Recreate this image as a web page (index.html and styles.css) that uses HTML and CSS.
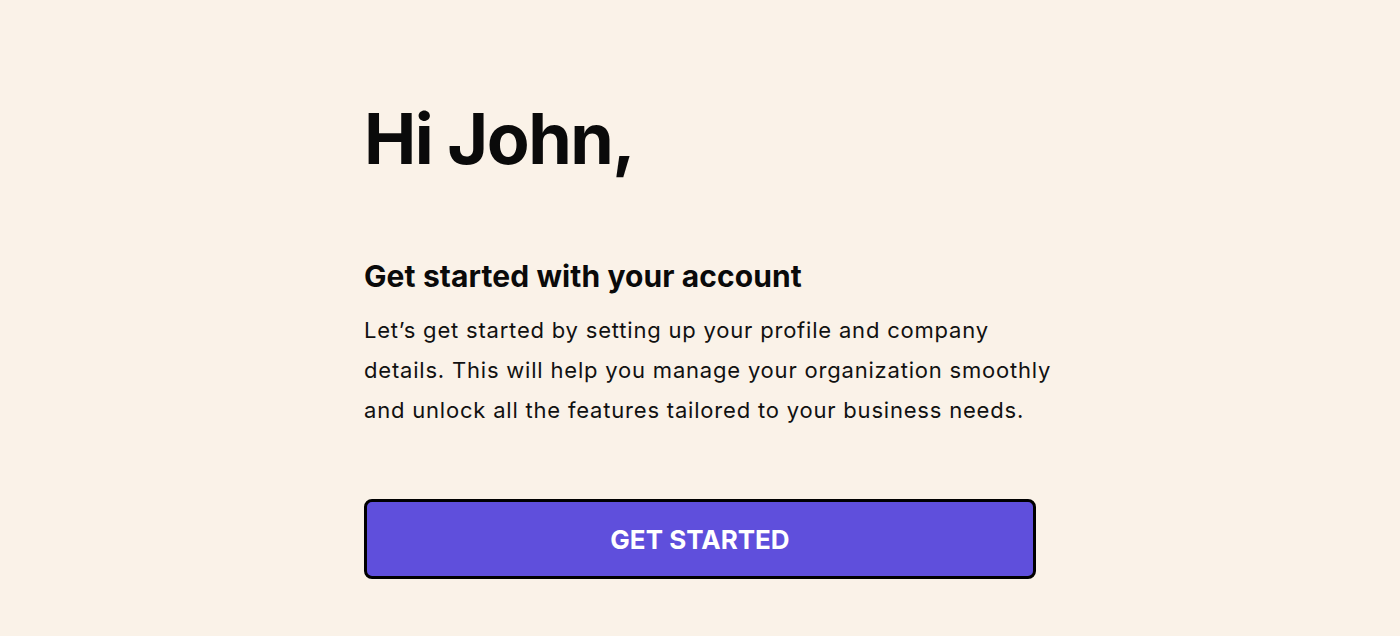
FILE: index.html
```html
<!DOCTYPE html>
<html lang="en">
<head>
<meta charset="utf-8">
<title>Welcome</title>
<link rel="stylesheet" href="styles.css">
</head>
<body>
<main class="page">
  <section class="welcome">
    <h1 class="greeting">Hi John,</h1>
    <h2 class="subtitle">Get started with your account</h2>
    <p class="intro">Let’s get started by setting up your profile and company details. This will help you manage your organization smoothly and unlock all the features tailored to your business needs.</p>
    <button class="cta" type="button">GET STARTED</button>
  </section>
</main>
</body>
</html>
```

FILE: styles.css
```css
html, body {
  margin: 0;
  padding: 0;
  background: #faf2e8;
}
body {
  font-family: Inter, "Liberation Sans", sans-serif;
  color: #0a0a0a;
}
.page {
  display: flex;
  justify-content: center;
  padding-top: 96px;
}
.welcome {
  width: 672px;
  display: flex;
  flex-direction: column;
}
.greeting {
  margin: 0;
  font-size: 70px;
  line-height: 86px;
  font-weight: 700;
  letter-spacing: -1.5px;
}
.subtitle {
  margin: 76px 0 0;
  font-size: 30px;
  line-height: 36px;
  font-weight: 700;
  letter-spacing: 0.1px;
}
.intro {
  margin: 16px -24px 0 0;
  font-size: 22px;
  line-height: 40px;
  font-weight: 400;
  letter-spacing: 0.8px;
  color: #111;
}
.cta {
  margin-top: 69px;
  height: 80px;
  border: 3px solid #000;
  border-radius: 8px;
  background: #5f4fdc;
  color: #fff;
  font-family: Inter, "Liberation Sans", sans-serif;
  font-size: 26px;
  font-weight: 700;
  cursor: pointer;
}
```
